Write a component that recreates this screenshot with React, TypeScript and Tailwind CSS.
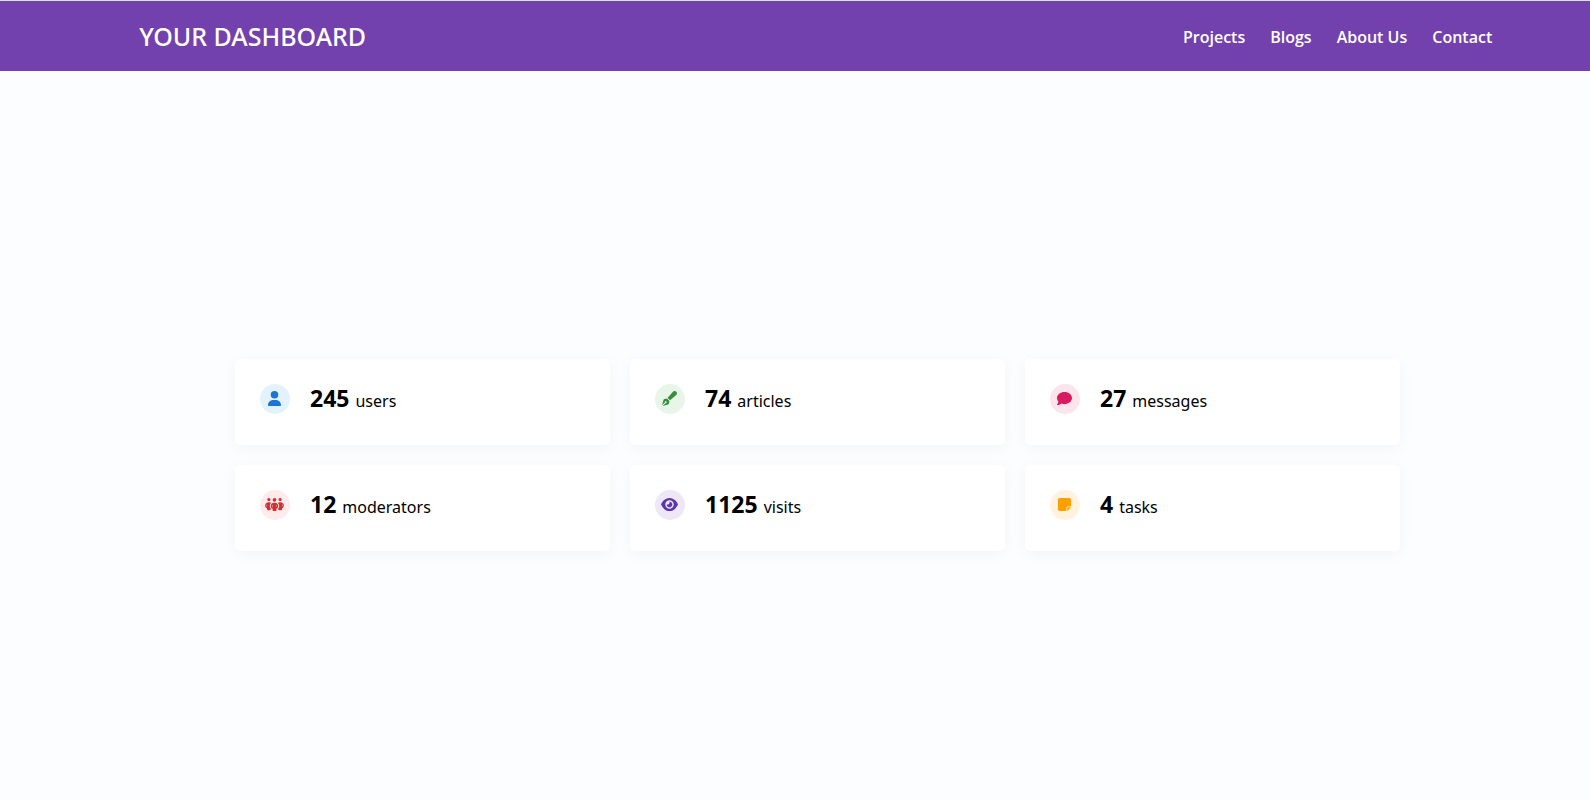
import type { IconType } from "react-icons";
import { FaComment, FaEye, FaNoteSticky, FaPenFancy, FaPeopleGroup, FaUser } from "react-icons/fa6";

type Stat = { value: number; label: string; icon: IconType; iconWidth: string; tone: string };

const stats: Stat[] = [
  { value: 245, label: "users", icon: FaUser, iconWidth: "w-[15px]", tone: "bg-[#e3f2fd] text-[#1976d2]" },
  { value: 74, label: "articles", icon: FaPenFancy, iconWidth: "w-[15px]", tone: "bg-[#e8f5e9] text-[#388e3c]" },
  { value: 27, label: "messages", icon: FaComment, iconWidth: "w-[15px]", tone: "bg-[#fce4ec] text-[#d81b60]" },
  { value: 12, label: "moderators", icon: FaPeopleGroup, iconWidth: "w-[19px]", tone: "bg-[#ffebee] text-[#d32f2f]" },
  { value: 1125, label: "visits", icon: FaEye, iconWidth: "w-[17px]", tone: "bg-[#ede7f6] text-[#5e35b1]" },
  { value: 4, label: "tasks", icon: FaNoteSticky, iconWidth: "w-[15px]", tone: "bg-[#fff3e0] text-[#ffa000]" },
];

const links = ["Projects", "Blogs", "About Us", "Contact"];

function StatCard({ value, label, icon: Icon, iconWidth, tone }: Stat) {
  return (
    <li className="flex h-[86px] items-start gap-5 rounded-[5px] bg-white px-[25px] pt-[25px] shadow-[0_3px_15px_rgba(0,0,0,0.04)]">
      <span className={`flex size-[30px] shrink-0 items-center justify-center rounded-full pr-px pb-px ${tone}`}>
        <Icon aria-hidden="true" className={`h-[15px] shrink-0 ${iconWidth}`} />
      </span>
      <p className="flex items-baseline gap-1.5 leading-7">
        <strong className="text-[23px] leading-7 font-bold">{value}</strong>
        <span>{label}</span>
      </p>
    </li>
  );
}

export default function App() {
  return (
    <div className="flex min-h-screen flex-col border-t border-[#dcdfe3] bg-[#fcfdff] font-['Noto_Sans',sans-serif] text-base text-black">
      <header className="flex h-[70px] items-center justify-between bg-[#7341ae] pt-0.5 pr-[6.15%] pl-[8.75%] text-white">
        <h1 className="text-[25px] font-medium">YOUR DASHBOARD</h1>
        <nav className="flex gap-[25px] font-['Open_Sans',sans-serif] font-semibold">
          {links.map((link) => (
            <a key={link} href="#">
              {link}
            </a>
          ))}
        </nav>
      </header>
      <main className="flex grow flex-col justify-center pt-[39px] pr-[190px] pl-[235px]">
        <ul className="grid grid-cols-3 gap-5">
          {stats.map((stat) => (
            <StatCard key={stat.label} {...stat} />
          ))}
        </ul>
      </main>
    </div>
  );
}
